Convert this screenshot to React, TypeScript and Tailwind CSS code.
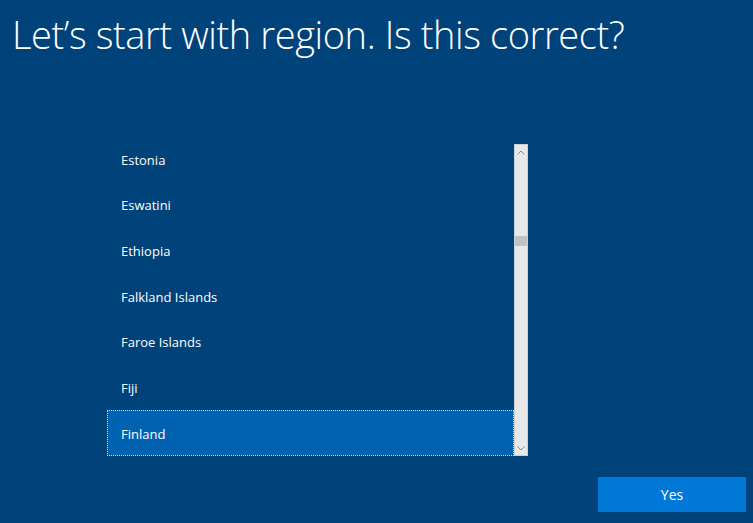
import React, { useState } from 'react';

const regions = ['Estonia', 'Eswatini', 'Ethiopia', 'Falkland Islands', 'Faroe Islands', 'Fiji', 'Finland'];

const App: React.FC = () => {
  const [selected, setSelected] = useState('Finland');

  return (
    <div className="h-[523px] w-[753px] overflow-hidden bg-[#00427a] text-white" style={{ fontFamily: '"Open Sans", "Noto Sans", sans-serif' }}>
      <h1 className="pl-[12px] pt-[8px] text-[38px] font-light leading-[52px] tracking-[-0.4px] text-white">
        Let’s start with region. Is this correct?
      </h1>

      <div className="ml-[107px] mt-[84px] flex h-[312px] w-[421px]">
        <div className="h-full flex-1 overflow-hidden">
          <ul className="-mt-[8px]">
            {regions.map((r) => (
              <li
                key={r}
                onClick={() => setSelected(r)}
                className={`flex h-[45.7px] items-center pl-[13px] pt-[3px] text-[13px] ${
                  selected === r ? 'border border-dotted border-[#c8d4e0] bg-[#0063b1]' : 'border border-transparent'
                }`}
              >
                {r}
              </li>
            ))}
          </ul>
        </div>

        {/* scrollbar */}
        <div className="flex h-full w-[14px] flex-col border border-[#d0d0d0] bg-[#e8e8e8]">
          <div className="flex h-[14px] items-center justify-center">
            <svg width="8" height="5" viewBox="0 0 8 5" fill="none">
              <path d="M0.5 4.5L4 1L7.5 4.5" stroke="#8a8a8a" strokeWidth="1" />
            </svg>
          </div>
          <div className="mt-[77px] h-[10px] bg-[#c2c2c2]" />
          <div className="flex-1" />
          <div className="flex h-[14px] items-center justify-center">
            <svg width="8" height="5" viewBox="0 0 8 5" fill="none">
              <path d="M0.5 0.5L4 4L7.5 0.5" stroke="#8a8a8a" strokeWidth="1" />
            </svg>
          </div>
        </div>
      </div>

      <div className="mr-[7px] mt-[21px] flex justify-end">
        <button className="h-[35px] w-[148px] bg-[#0078d7] text-[14px] text-white">Yes</button>
      </div>
    </div>
  );
};

export default App;
